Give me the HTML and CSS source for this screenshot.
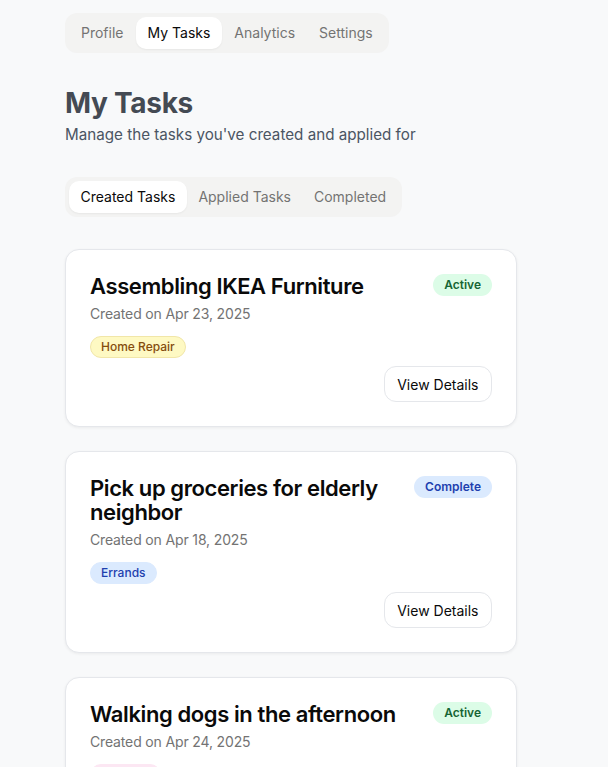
FILE: index.html
```html
<!DOCTYPE html>
<html>
<head>
<meta charset="utf-8">
<link rel="stylesheet" href="styles.css">
</head>
<body>
<div class="page">
  <nav class="tabs">
    <span class="tab">Profile</span>
    <span class="tab active">My Tasks</span>
    <span class="tab">Analytics</span>
    <span class="tab">Settings</span>
  </nav>

  <header class="head">
    <h1>My Tasks</h1>
    <p>Manage the tasks you've created and applied for</p>
  </header>

  <nav class="tabs sub">
    <span class="tab active">Created Tasks</span>
    <span class="tab">Applied Tasks</span>
    <span class="tab">Completed</span>
  </nav>

  <div class="cards">
    <div class="card">
      <div class="card-top">
        <h2>Assembling IKEA Furniture</h2>
        <span class="badge green">Active</span>
      </div>
      <div class="date">Created on Apr 23, 2025</div>
      <div class="tags"><span class="tag yellow">Home Repair</span></div>
      <div class="actions"><button class="btn">View Details</button></div>
    </div>

    <div class="card">
      <div class="card-top">
        <h2>Pick up groceries for elderly neighbor</h2>
        <span class="badge blue">Complete</span>
      </div>
      <div class="date">Created on Apr 18, 2025</div>
      <div class="tags"><span class="tag blue">Errands</span></div>
      <div class="actions"><button class="btn">View Details</button></div>
    </div>

    <div class="card">
      <div class="card-top">
        <h2>Walking dogs in the afternoon</h2>
        <span class="badge green">Active</span>
      </div>
      <div class="date">Created on Apr 24, 2025</div>
      <div class="tags"><span class="tag pink">Pet Care</span></div>
      <div class="actions"><button class="btn">View Details</button></div>
    </div>
  </div>
</div>
</body>
</html>
```

FILE: styles.css
```css
* { box-sizing: border-box; }
html, body { margin: 0; padding: 0; }
body {
  background: #f8f9fa;
  font-family: Inter, "Liberation Sans", sans-serif;
  color: #0a0a0a;
}
.page {
  width: 452px;
  margin-left: 65px;
  padding-top: 13px;
  padding-bottom: 40px;
}
.tabs {
  display: inline-flex;
  align-items: center;
  background: #f3f3f2;
  border-radius: 12px;
  padding: 4px;
  height: 40px;
}
.tab {
  font-size: 14px;
  color: #737373;
  padding: 0 12px;
  height: 32px;
  line-height: 32px;
  border-radius: 10px;
}
.tabs.sub .tab { padding: 0 11.5px; }
.tab.active {
  background: #ffffff;
  color: #0a0a0a;
  box-shadow: 0 1px 2px rgba(0,0,0,0.05);
}
.head { margin-top: 32px; }
.head h1 {
  margin: 0;
  font-size: 28px;
  line-height: 36px;
  font-weight: 700;
  color: #444a53;
  letter-spacing: -0.3px;
}
.head p {
  margin: 2px 0 0;
  font-size: 15.2px;
  line-height: 24px;
  color: #4b5563;
}
.tabs.sub { margin-top: 30px; }
.cards {
  margin-top: 32px;
  display: flex;
  flex-direction: column;
  gap: 24px;
}
.card {
  background: #fff;
  border: 1px solid #e5e7eb;
  border-radius: 14px;
  padding: 24px;
  box-shadow: 0 1px 3px rgba(0,0,0,0.06);
}
.card-top {
  display: flex;
  justify-content: space-between;
  align-items: flex-start;
  gap: 16px;
}
.card h2 {
  margin: 0;
  font-size: 22px;
  line-height: 24px;
  font-weight: 600;
  letter-spacing: -0.4px;
  color: #0a0a0a;
}
.badge {
  flex: none;
  font-size: 12px;
  font-weight: 600;
  line-height: 22px;
  height: 22px;
  padding: 0 11px;
  border-radius: 999px;
}
.badge.green { background: #dcfce7; color: #166534; }
.badge.blue { background: #dbeafe; color: #1e40af; }
.date {
  margin-top: 6px;
  font-size: 14px;
  line-height: 20px;
  letter-spacing: -0.15px;
  color: #737373;
}
.tags { margin-top: 12px; display: flex; }
.tag {
  font-size: 12px;
  font-weight: 500;
  line-height: 20px;
  padding: 0 10px;
  border-radius: 999px;
  border: 1px solid transparent;
}
.tag.yellow { background: #fef9c3; color: #854d0e; border-color: #f1e6a8; }
.tag.blue { background: #dbeafe; color: #1e40af; border-color: #dbeafe; }
.tag.pink { background: #fce7f3; color: #9d174d; border-color: #fce7f3; }
.actions {
  margin-top: 8px;
  display: flex;
  justify-content: flex-end;
}
.btn {
  font-family: inherit;
  font-size: 14px;
  color: #0a0a0a;
  background: #fff;
  border: 1px solid #e5e7eb;
  border-radius: 12px;
  height: 36px;
  padding: 0 12.5px;
  cursor: pointer;
}
```
